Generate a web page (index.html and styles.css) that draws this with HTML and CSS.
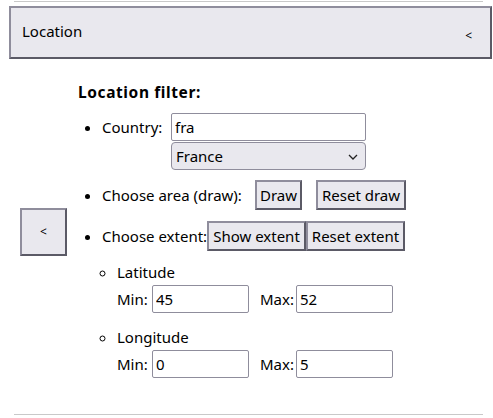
FILE: index.html
```html
<!DOCTYPE html>
<html>
<head>
<meta charset="utf-8">
<link rel="stylesheet" href="styles.css">
</head>
<body>
<div class="rule rule-top"></div>
<div class="header">
  <span class="header-title">Location</span>
  <span class="header-toggle">&lt;</span>
</div>
<div class="main">
  <button class="btn side-btn">&lt;</button>
  <div class="panel">
    <div class="panel-title">Location filter:</div>
    <ul class="filters">
      <li class="item country-item">
        <div class="line country-line">
          <span class="label country-label">Country:</span>
          <div class="country-fields">
            <input class="field country-input" type="text" value="fra">
            <div class="select-wrap">
              <select class="field country-select"><option>France</option></select>
              <svg class="chevron" width="10" height="6" viewBox="0 0 10 6"><path d="M1 1 L5 5 L9 1" fill="none" stroke="#222" stroke-width="1.3"/></svg>
            </div>
          </div>
        </div>
      </li>
      <li class="item area-item">
        <div class="line">
          <span class="label area-label">Choose area (draw):</span>
          <button class="btn draw-btn">Draw</button>
          <button class="btn reset-draw-btn">Reset draw</button>
        </div>
      </li>
      <li class="item extent-item">
        <div class="line">
          <span class="label extent-label">Choose extent:</span>
          <button class="btn show-extent-btn">Show extent</button>
          <button class="btn reset-extent-btn">Reset extent</button>
        </div>
        <ul class="sub">
          <li class="sub-item">
            <div class="sub-title">Latitude</div>
            <div class="range">
              <span class="label min-label">Min:</span>
              <input class="field num-input" type="text" value="45">
              <span class="label max-label">Max:</span>
              <input class="field num-input" type="text" value="52">
            </div>
          </li>
          <li class="sub-item lon">
            <div class="sub-title">Longitude</div>
            <div class="range">
              <span class="label min-label">Min:</span>
              <input class="field num-input" type="text" value="0">
              <span class="label max-label">Max:</span>
              <input class="field num-input" type="text" value="5">
            </div>
          </li>
        </ul>
      </li>
    </ul>
  </div>
</div>
<div class="rule rule-bottom"></div>
</body>
</html>
```

FILE: styles.css
```css
html, body {
  margin: 0;
  padding: 0;
  background: #ffffff;
}
body {
  font-family: "Noto Sans", "Open Sans", sans-serif;
  font-size: 15px;
  color: #000;
  width: 493px;
  overflow: hidden;
}
.rule {
  height: 1px;
  background: #c9c9c9;
  margin-left: 14px;
  width: 469px;
}
.rule-top {
  margin-top: 1px;
}
.rule-bottom {
  margin-top: 33px;
}
.header {
  margin: 4px 0 0 9px;
  width: 483px;
  height: 53px;
  box-sizing: border-box;
  background: #e9e8ee;
  border: 2px solid;
  border-color: #8f8d9c #5b5a66 #5b5a66 #8f8d9c;
  display: flex;
  align-items: center;
  justify-content: space-between;
  padding: 0 18px 0 11px;
}
.header-title {
  font-size: 15px;
  line-height: 20px;
  margin-top: -4px;
}
.header-toggle {
  font-size: 12px;
  line-height: 14px;
  margin-top: 6px;
}
.btn {
  font-family: inherit;
  font-size: 15px;
  color: #000;
  background: #e9e8ee;
  border: 2px solid;
  border-color: #8f8d9c #5b5a66 #5b5a66 #8f8d9c;
  border-radius: 0;
  padding: 0;
  height: 30px;
  line-height: 24px;
  box-sizing: border-box;
  margin: 0;
  white-space: nowrap;
  text-align: center;
}
.main {
  display: flex;
  align-items: center;
  margin-top: 23px;
}
.side-btn {
  margin-left: 20px;
  width: 47px;
  height: 48px;
  font-size: 12px;
  flex: none;
}
.panel {
  margin-left: 11px;
  padding-bottom: 3px;
}
.panel-title {
  font-weight: bold;
  font-size: 15.5px;
  letter-spacing: 0.6px;
  line-height: 20px;
}
.filters {
  margin: 11px 0 0 0;
  padding: 0 0 0 24px;
  list-style: disc;
}
.item {
  line-height: 28px;
}
.line {
  display: flex;
  align-items: center;
  white-space: nowrap;
}
.country-line {
  align-items: flex-start;
}
.label {
  white-space: nowrap;
  flex: none;
}
.country-label {
  width: 69px;
}
.country-fields {
  display: flex;
  flex-direction: column;
  gap: 1px;
}
.field {
  font-family: inherit;
  font-size: 15px;
  color: #000;
  box-sizing: border-box;
  height: 28px;
  border: 1px solid #8f8d9c;
  border-radius: 2px;
  padding: 0 3px;
  margin: 0;
  background: #fff;
  outline: none;
}
.country-input {
  width: 195px;
}
.select-wrap {
  position: relative;
  width: 195px;
  height: 28px;
}
.country-select {
  width: 195px;
  -webkit-appearance: none;
  appearance: none;
  background: #e9e8ee;
  border-radius: 4px;
  padding: 0 4px;
}
.chevron {
  position: absolute;
  right: 8px;
  top: 12px;
  pointer-events: none;
}
.area-item {
  margin-top: 10px;
}
.area-label {
  width: 153px;
}
.draw-btn {
  width: 47px;
}
.reset-draw-btn {
  margin-left: 14px;
  width: 90px;
}
.extent-item {
  margin-top: 11px;
}
.extent-label {
  width: 105px;
}
.show-extent-btn {
  width: 99px;
}
.reset-extent-btn {
  width: 99px;
}
.sub {
  list-style: circle;
  margin: 11px 0 0 0;
  padding: 0 0 0 15px;
}
.sub-item {
  line-height: 20px;
}
.sub-title {
  line-height: 20px;
}
.range {
  margin-top: 3px;
  display: flex;
  align-items: center;
  line-height: 28px;
}
.min-label {
  width: 35px;
}
.max-label {
  margin-left: 11px;
  width: 36px;
}
.num-input {
  width: 97px;
}
.lon {
  margin-top: 14px;
}
```
